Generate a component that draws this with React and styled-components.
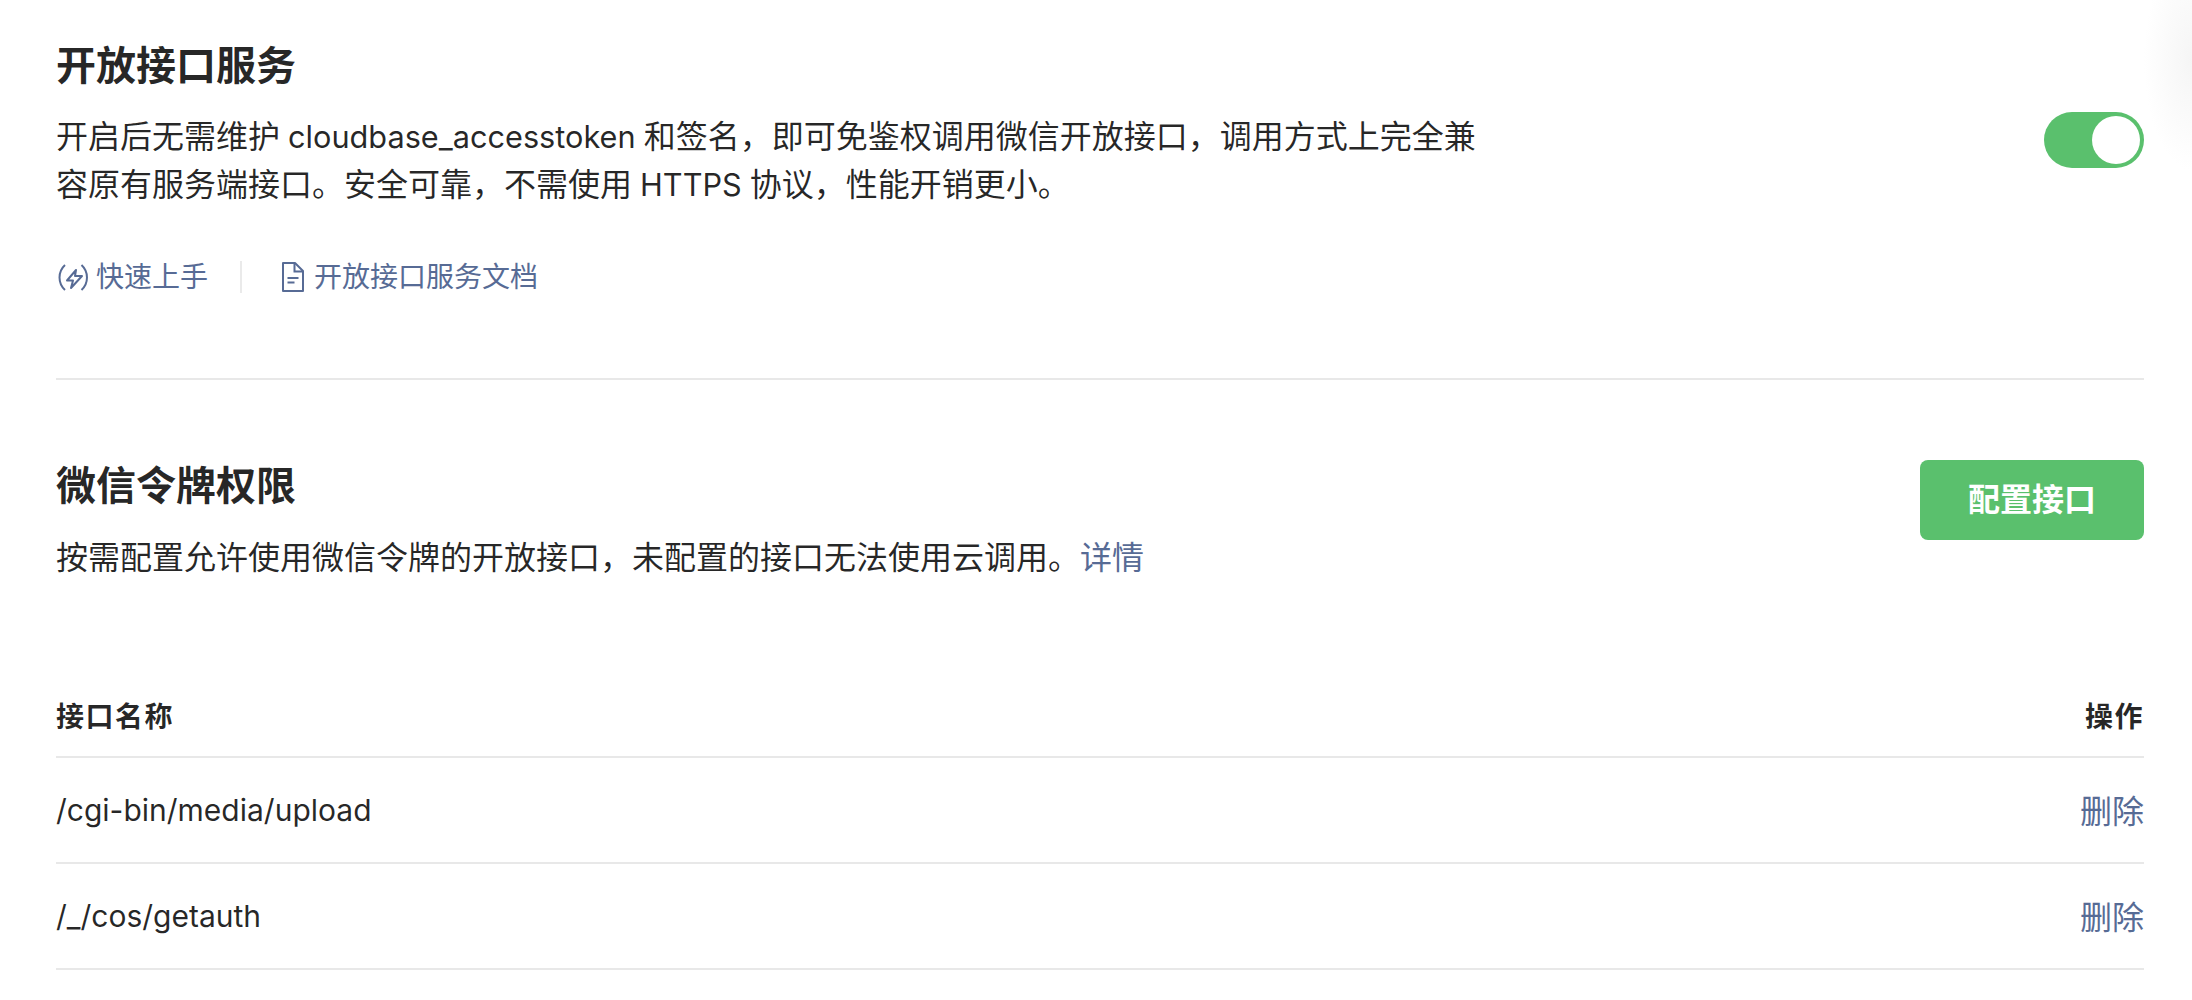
import React from 'react';
import styled, { createGlobalStyle } from 'styled-components';

const GlobalStyle = createGlobalStyle`
  html, body {
    margin: 0;
    background: #fff;
  }
  body {
    font-family: Inter, "Noto Sans CJK SC", sans-serif;
    color: rgba(0, 0, 0, 0.85);
  }
`;

const Page = styled.div`
  width: 2192px;
  height: 1000px;
  overflow: hidden;
  box-sizing: border-box;
  padding: 42px 48px 0 56px;
  background: radial-gradient(ellipse 48px 110px at 100% 60px, #f5f5f5, #fff);
`;
const Section = styled.section`
  display: flex;
  justify-content: space-between;
  align-items: flex-start;
`;
const TopSection = styled(Section)`
  padding-bottom: 81px;
  border-bottom: 2px solid #e8e8e8;
`;
const Title = styled.h2`
  margin: 0;
  font-size: 40px;
  line-height: 48px;
  font-weight: 700;
`;
const Desc = styled.p`
  margin: 23px 0 0;
  font-size: 32px;
  line-height: 48px;
`;
const ShortDesc = styled(Desc)`
  margin-top: 24px;
`;
const DescLine = styled.span`
  display: flex;
  gap: 8px;
  white-space: nowrap;
`;
const Latin = styled.span`
  font-size: 30.7px;
`;
const Links = styled.div`
  display: flex;
  align-items: center;
  margin-top: 48px;
`;
const LinkItem = styled.a`
  display: flex;
  align-items: center;
  gap: ${p => p.$gap}px;
  font-size: 28px;
  line-height: 40px;
  color: #576b95;
`;
const LinkSep = styled.span`
  width: 2px;
  height: 32px;
  margin: 0 40px 0 32px;
  background: #eaeaea;
`;
const Toggle = styled.div`
  display: flex;
  justify-content: flex-end;
  box-sizing: border-box;
  width: 100px;
  height: 56px;
  margin-top: 70px;
  padding: 4px;
  border-radius: 28px;
  background: #5ac06d;
`;
const Knob = styled.span`
  width: 48px;
  height: 48px;
  border-radius: 50%;
  background: #fff;
`;
const SecondSection = styled(Section)`
  margin-top: 82px;
`;
const Button = styled.button`
  width: 224px;
  height: 80px;
  margin-top: -2px;
  border: 0;
  border-radius: 8px;
  background: #5ac06d;
  color: #fff;
  font: 600 32px/1 Inter, "Noto Sans CJK SC", sans-serif;
`;
const InlineLink = styled.a`
  color: #576b95;
`;
const Table = styled.div`
  margin-top: 115px;
`;
const Row = styled.div`
  display: flex;
  justify-content: space-between;
  align-items: center;
  height: 104px;
  border-bottom: 2px solid #e8e8e8;
  font-size: 30px;
`;
const HeadRow = styled(Row)`
  height: 59px;
  align-items: flex-start;
  font-size: 28px;
  font-weight: 700;
  letter-spacing: 1.5px;
  line-height: 40px;
`;
const Del = styled.a`
  margin-bottom: 2px;
  color: #576b95;
  font-size: 32px;
`;

const QuickIcon = () => (
  <svg width="32" height="32" viewBox="0 0 32 32" fill="none" stroke="#576b95" strokeWidth="2">
    <path d="M9 4a17 17 0 0 0 0 25" />
    <path d="M25.5 4a17 17 0 0 1 0 25" />
    <path d="M20 9 11 19.5h6L15 27l11-12h-7z" strokeLinejoin="round" />
  </svg>
);
const DocIcon = () => (
  <svg width="22" height="30" viewBox="0 0 22 30" fill="none" stroke="#576b95" strokeWidth="2">
    <path d="M1 1h12l8 8v20H1z" strokeLinejoin="round" />
    <path d="M12.5 1.5V9.5H21" />
    <path d="M5.5 16h11M5.5 20.5h7" />
  </svg>
);

export default function App() {
  return (
    <Page>
      <GlobalStyle />
      <TopSection>
        <div>
          <Title>开放接口服务</Title>
          <Desc>
            <DescLine>
              <span>开启后无需维护</span>
              <Latin>cloudbase_accesstoken</Latin>
              <span>和签名，即可免鉴权调用微信开放接口，调用方式上完全兼</span>
            </DescLine>
            <DescLine>
              <span>容原有服务端接口。安全可靠，不需使用</span>
              <Latin>HTTPS</Latin>
              <span>协议，性能开销更小。</span>
            </DescLine>
          </Desc>
          <Links>
            <LinkItem $gap={8}>
              <QuickIcon />
              快速上手
            </LinkItem>
            <LinkSep />
            <LinkItem $gap={10}>
              <DocIcon />
              开放接口服务文档
            </LinkItem>
          </Links>
        </div>
        <Toggle>
          <Knob />
        </Toggle>
      </TopSection>
      <SecondSection>
        <div>
          <Title>微信令牌权限</Title>
          <ShortDesc>
            按需配置允许使用微信令牌的开放接口，未配置的接口无法使用云调用。
            <InlineLink>详情</InlineLink>
          </ShortDesc>
        </div>
        <Button>配置接口</Button>
      </SecondSection>
      <Table>
        <HeadRow>
          <span>接口名称</span>
          <span>操作</span>
        </HeadRow>
        <Row>
          <span>/cgi-bin/media/upload</span>
          <Del>删除</Del>
        </Row>
        <Row>
          <span>/_/cos/getauth</span>
          <Del>删除</Del>
        </Row>
      </Table>
    </Page>
  );
}
